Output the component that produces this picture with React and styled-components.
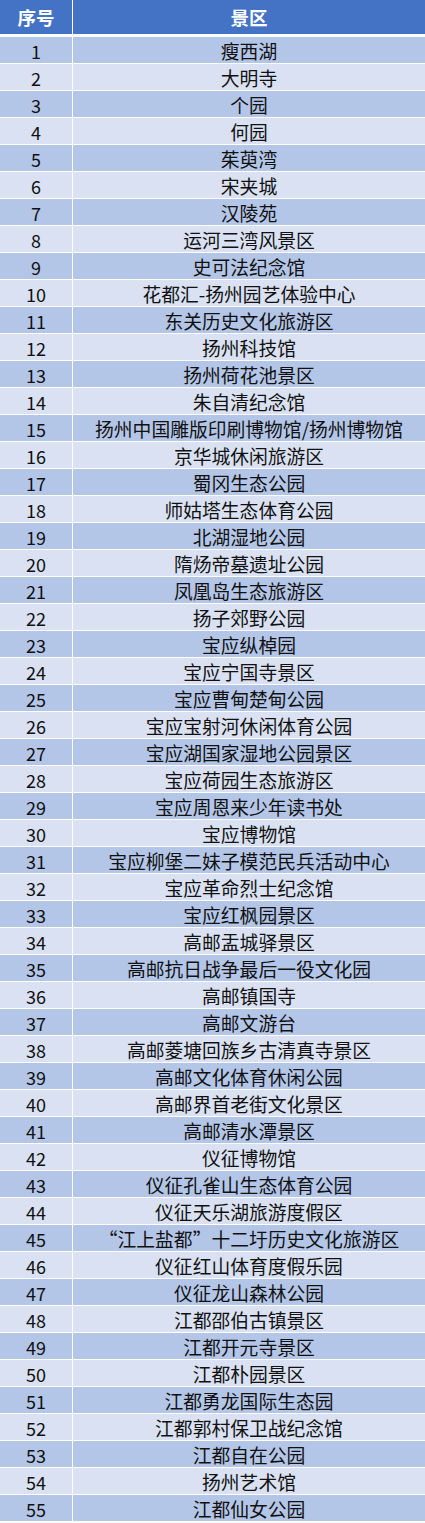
import React from "react";
import styled, { createGlobalStyle } from "styled-components";

const spots = [
  "瘦西湖", "大明寺", "个园", "何园", "茱萸湾", "宋夹城", "汉陵苑", "运河三湾风景区",
  "史可法纪念馆", "花都汇-扬州园艺体验中心", "东关历史文化旅游区", "扬州科技馆",
  "扬州荷花池景区", "朱自清纪念馆", "扬州中国雕版印刷博物馆/扬州博物馆", "京华城休闲旅游区",
  "蜀冈生态公园", "师姑塔生态体育公园", "北湖湿地公园", "隋炀帝墓遗址公园",
  "凤凰岛生态旅游区", "扬子郊野公园", "宝应纵棹园", "宝应宁国寺景区", "宝应曹甸楚甸公园",
  "宝应宝射河休闲体育公园", "宝应湖国家湿地公园景区", "宝应荷园生态旅游区",
  "宝应周恩来少年读书处", "宝应博物馆", "宝应柳堡二妹子模范民兵活动中心",
  "宝应革命烈士纪念馆", "宝应红枫园景区", "高邮盂城驿景区", "高邮抗日战争最后一役文化园",
  "高邮镇国寺", "高邮文游台", "高邮菱塘回族乡古清真寺景区", "高邮文化体育休闲公园",
  "高邮界首老街文化景区", "高邮清水潭景区", "仪征博物馆", "仪征孔雀山生态体育公园",
  "仪征天乐湖旅游度假区", "“江上盐都”十二圩历史文化旅游区", "仪征红山体育度假乐园",
  "仪征龙山森林公园", "江都邵伯古镇景区", "江都开元寺景区", "江都朴园景区",
  "江都勇龙国际生态园", "江都郭村保卫战纪念馆", "江都自在公园", "扬州艺术馆", "江都仙女公园",
];

const GlobalStyle = createGlobalStyle`
  html, body {
    margin: 0;
    padding: 0;
    background: #fff;
  }
  body {
    font-family: "Noto Sans CJK SC", "Noto Sans", sans-serif;
  }
`;

const Table = styled.div`
  width: 425px;
  display: grid;
  grid-template-columns: 72px 1fr;
  column-gap: 1px;
  background: #fff;
`;

const HeadCell = styled.div`
  height: 34px;
  margin-bottom: 3px;
  background: #4472c4;
  color: #fff;
  font-weight: 700;
  font-size: 18.5px;
  display: flex;
  align-items: center;
  justify-content: center;
`;

const Cell = styled.div`
  height: 26px;
  margin-bottom: 1px;
  background: ${(p) => (p.$odd ? "#b4c6e7" : "#d9e1f2")};
  color: #111;
  font-size: ${(p) => (p.$num ? "18px" : "18.8px")};
  display: flex;
  align-items: center;
  justify-content: center;
  white-space: nowrap;
  padding-top: 1px;
  box-sizing: border-box;
`;

export default function App() {
  return (
    <>
      <GlobalStyle />
      <Table>
        <HeadCell>序号</HeadCell>
        <HeadCell>景区</HeadCell>
        {spots.map((name, i) => (
          <React.Fragment key={i}>
            <Cell $odd={i % 2 === 0} $num>{i + 1}</Cell>
            <Cell $odd={i % 2 === 0}>{name}</Cell>
          </React.Fragment>
        ))}
      </Table>
    </>
  );
}
